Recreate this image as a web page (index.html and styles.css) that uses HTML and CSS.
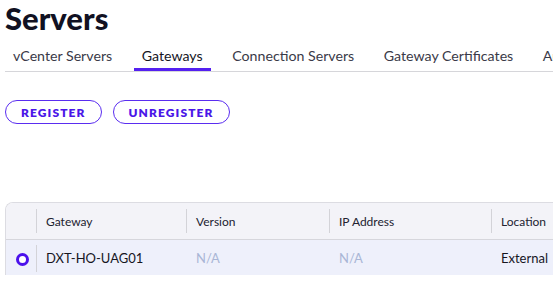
FILE: index.html
```html
<!DOCTYPE html>
<html>

<head>
    <title>Servers</title>
    <link rel="stylesheet" href="styles.css">
</head>

<body>

    <h1>Servers</h1>

    <div class="tabs">
        <a class="tab">vCenter Servers</a>
        <a class="tab active">Gateways</a>
        <a class="tab">Connection Servers</a>
        <a class="tab">Gateway Certificates</a>
        <a class="tab">Authentication</a>
    </div>

    <div class="actions">
        <button class="btn">REGISTER</button>
        <button class="btn">UNREGISTER</button>
    </div>

    <div class="grid">
        <table>
            <tr>
                <th class="sel"></th>
                <th class="c-gw">Gateway</th>
                <th class="c-ver">Version</th>
                <th class="c-ip">IP Address</th>
                <th class="c-loc">Location</th>
            </tr>
            <tr class="selected">
                <td class="sel"><span class="radio"></span></td>
                <td>DXT-HO-UAG01</td>
                <td class="na">N/A</td>
                <td class="na">N/A</td>
                <td>External</td>
            </tr>
        </table>
    </div>

</body>

</html>
```

FILE: styles.css
```css
body {
    margin: 0;
    padding: 0 0 0 5px;
    font-family: Lato, "Noto Sans", sans-serif;
    color: #1b1b2a;
    background: #ffffff;
    overflow: hidden;
    width: 548px;
}

h1 {
    margin: 0;
    padding-top: 1px;
    font-size: 31px;
    font-weight: 900;
    line-height: 34px;
    color: #111122;
}

.tabs {
    display: flex;
    white-space: nowrap;
    border-bottom: 1px solid #d6d6da;
    margin-top: 10px;
    width: 700px;
}

.tab {
    font-size: 14.2px;
    color: #3a3a48;
    padding: 2px 8px 0 8px;
    margin-right: 13.5px;
    height: 26px;
    line-height: 18px;
    box-sizing: border-box;
}

.tab.active {
    color: #16161f;
    border-bottom: 3px solid #5420f0;
}

.actions {
    display: flex;
    gap: 11px;
    margin-top: 28px;
}

.btn {
    font-family: inherit;
    font-size: 12px;
    font-weight: 800;
    letter-spacing: 1.1px;
    color: #4a16e8;
    background: #ffffff;
    border: 1px solid #5a2df0;
    border-radius: 12px;
    height: 24px;
    padding: 0 15px;
}

.grid {
    margin-top: 78px;
    width: 640px;
    border: 1px solid #dcdce2;
    border-right: none;
    border-bottom: none;
    border-top-left-radius: 8px;
    overflow: hidden;
}

table {
    border-collapse: collapse;
    table-layout: fixed;
    width: 640px;
}

th {
    background: #f3f3f8;
    height: 36px;
    font-size: 12px;
    font-weight: 400;
    text-align: left;
    padding: 0 10px;
    color: #222230;
    border-bottom: 1px solid #d6d6dc;
    position: relative;
}

td {
    height: 35px;
    font-size: 13px;
    padding: 0 10px;
    color: #16161f;
    position: relative;
}

th + th::before,
td.sel + td::before {
    content: "";
    position: absolute;
    left: 0;
    top: 6px;
    bottom: 6px;
    border-left: 1px solid #d3d3d8;
}

td.sel + td::before {
    top: 5px;
    bottom: 3px;
}

.sel {
    width: 10px;
}

.c-gw {
    width: 130px;
}

.c-ver {
    width: 123px;
}

.c-ip {
    width: 142px;
}

tr.selected {
    background: #eef0fb;
}

td.na {
    color: #a9b6d6;
}

.radio {
    display: block;
    width: 7px;
    height: 7px;
    border: 3px solid #4b10ec;
    background: #ffffff;
    border-radius: 50%;
    margin-left: 0;
    margin-top: 3px;
}
```
